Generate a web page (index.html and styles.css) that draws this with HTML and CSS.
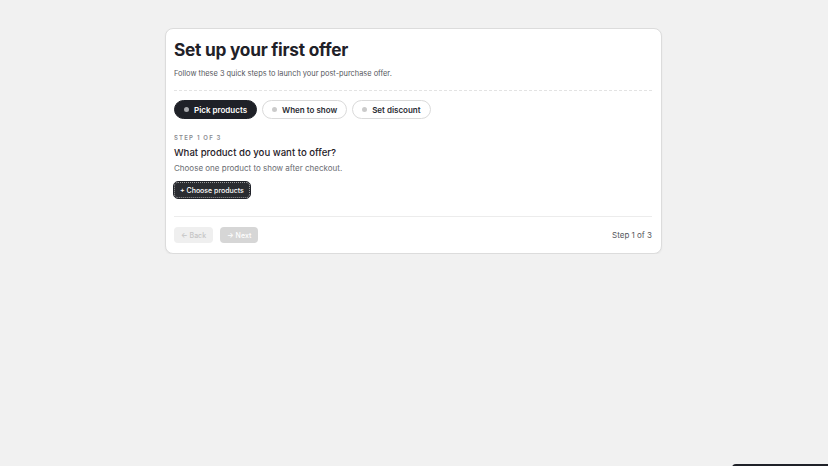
FILE: index.html
```html
<!DOCTYPE html>
<html lang="en">
<head>
<meta charset="utf-8">
<title>Set up your first offer</title>
<link rel="stylesheet" href="styles.css">
</head>
<body>
<main class="page">
  <section class="card">
    <h1 class="title">Set up your first offer</h1>
    <p class="subtitle">Follow these 3 quick steps to launch your post-purchase offer.</p>
    <div class="steps">
      <span class="chip chip-active"><span class="dot"></span>Pick products</span>
      <span class="chip"><span class="dot"></span>When to show</span>
      <span class="chip"><span class="dot"></span>Set discount</span>
    </div>
    <div class="body">
      <div class="eyebrow">STEP 1 OF 3</div>
      <h2 class="question">What product do you want to offer?</h2>
      <p class="hint">Choose one product to show after checkout.</p>
      <button class="choose">+ Choose products</button>
    </div>
    <div class="footer">
      <div class="nav">
        <button class="btn btn-back">← Back</button>
        <button class="btn btn-next">→ Next</button>
      </div>
      <span class="count">Step 1 of 3</span>
    </div>
  </section>
</main>
<div class="toast"></div>
</body>
</html>
```
FILE: styles.css
```css
html, body {
  margin: 0;
  padding: 0;
  background: #f1f1f1;
  font-family: Inter, "Noto Sans", "Liberation Sans", sans-serif;
  color: #1f2128;
}
.page {
  display: flex;
  justify-content: center;
  padding-top: 28px;
  padding-right: 1px;
}
.card {
  width: 478px;
  background: #fff;
  border: 1px solid #dcdcdc;
  border-radius: 8px;
  padding: 10px 9px 10px 8px;
  box-shadow: 0 1px 2px rgba(0,0,0,0.05);
}
.title {
  margin: 0;
  font-size: 17.3px;
  line-height: 22px;
  font-weight: 700;
  letter-spacing: -0.25px;
  color: #1f2128;
}
.subtitle {
  margin: 7px 0 0;
  font-size: 7.4px;
  line-height: 11px;
  color: #55575d;
}
.steps {
  display: flex;
  gap: 5px;
  border-top: 1px dashed #e3e3e3;
  margin-top: 11px;
  padding-top: 9px;
}
.chip {
  display: inline-flex;
  align-items: center;
  gap: 5px;
  height: 19px;
  box-sizing: border-box;
  padding: 0 9px;
  border: 1px solid #dadada;
  border-radius: 10px;
  font-size: 8px;
  font-weight: 600;
  color: #2a2c33;
  background: #fff;
}
.chip-active {
  background: #1f2128;
  border-color: #1f2128;
  color: #fff;
}
.dot {
  width: 5px;
  height: 5px;
  border-radius: 50%;
  background: #cbcbcb;
}
.chip-active .dot {
  background: #a6a7ab;
}
.body {
  padding-top: 14px;
  padding-bottom: 18px;
}
.eyebrow {
  font-size: 6px;
  letter-spacing: 1.2px;
  font-weight: 600;
  color: #8a8b90;
  line-height: 9px;
}
.question {
  margin: 4px 0 0;
  font-size: 9.6px;
  line-height: 14px;
  font-weight: 500;
  color: #1f2128;
}
.hint {
  margin: 3px 0 0;
  font-size: 8px;
  line-height: 11px;
  color: #6b6d72;
}
.choose {
  display: block;
  margin-top: 8px;
  height: 16px;
  padding: 0 5px;
  font-family: inherit;
  font-size: 7px;
  font-weight: 500;
  color: #fff;
  background: #2a2c31;
  border: 1px dotted #9a9a9a;
  border-radius: 4px;
  outline: 1px solid #1f2128;
}
.footer {
  display: flex;
  justify-content: space-between;
  align-items: center;
  border-top: 1px solid #ececec;
  padding-top: 10px;
}
.nav {
  display: flex;
  gap: 7px;
}
.btn {
  height: 16px;
  padding: 0 7px;
  font-family: inherit;
  font-size: 7px;
  font-weight: 500;
  border: none;
  border-radius: 4px;
}
.btn-back {
  background: #efefef;
  color: #c4c4c4;
}
.btn-next {
  background: #d6d6d6;
  color: #fff;
}
.count {
  font-size: 8px;
  color: #55575d;
}
.toast {
  position: fixed;
  left: 732px;
  top: 464px;
  width: 120px;
  height: 40px;
  background: #1f2128;
  border-radius: 4px;
}
```
